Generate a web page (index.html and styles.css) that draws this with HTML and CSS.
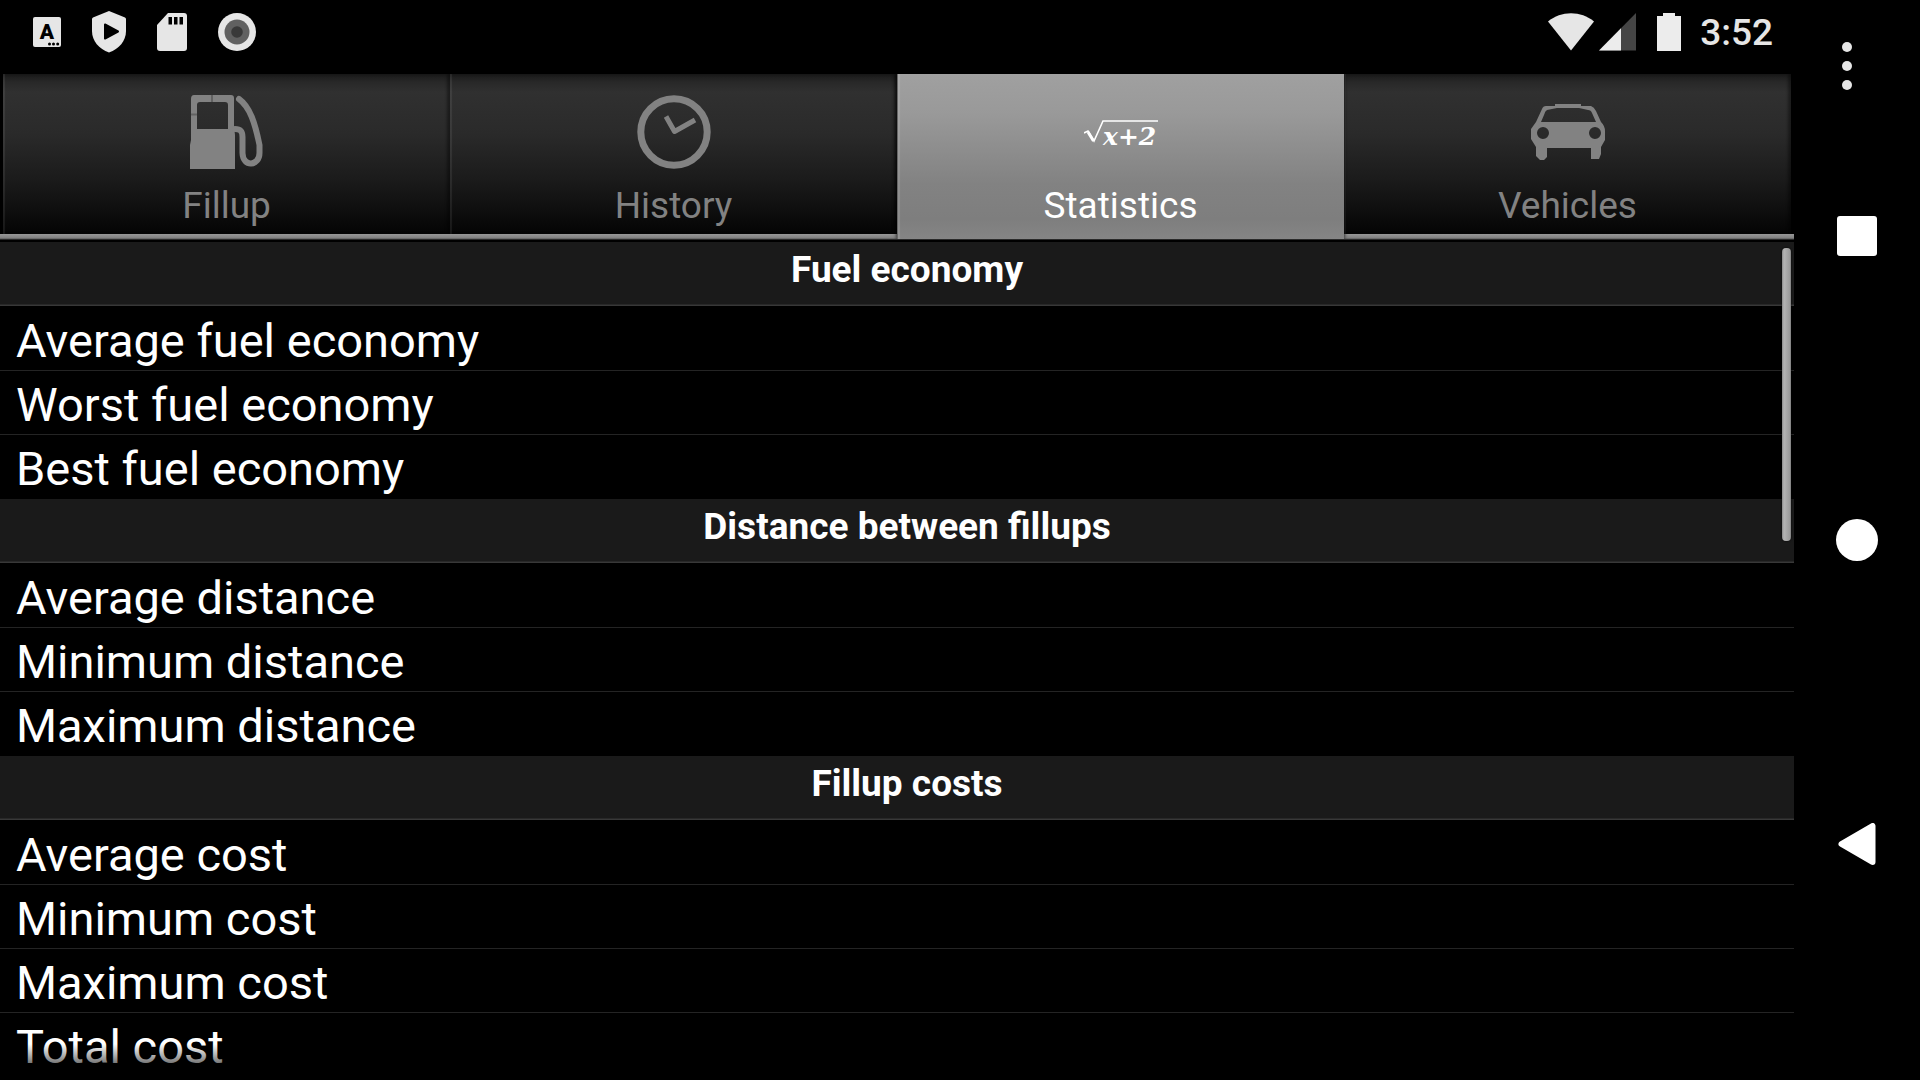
FILE: index.html
```html
<!DOCTYPE html>
<html lang="en">
<head>
<meta charset="utf-8">
<title>Statistics</title>
<meta name="viewport" content="width=device-width, initial-scale=1">
<link rel="stylesheet" href="styles.css">
</head>
<body>
<div class="screen">
  <div class="app">
    <header class="status">
      <div class="status-left">
        <svg class="icon" width="28" height="30" viewBox="0 0 28 30" aria-hidden="true">
          <rect width="28" height="30" rx="2" fill="#e6e6e6"/>
          <text class="keyboard-letter" x="14" y="22" text-anchor="middle">A</text>
          <circle cx="16.500" cy="27" r="1.500"/><circle cx="20.500" cy="27" r="1.500"/><circle cx="24.700" cy="27" r="1.500"/>
        </svg>
        <svg class="icon" width="34" height="42" viewBox="0 0 34 42" aria-hidden="true">
          <path fill="#e6e6e6" d="M17 0 33 6.500Q34 7 34 8V20C34 30 27 38 17 41.500C7 38 0 30 0 20V8Q0 7 1 6.500Z"/>
          <path d="M13 13.500 26 20.500 13 27.500Z" stroke="#000" stroke-width="2" stroke-linejoin="round"/>
        </svg>
        <svg class="icon" width="30" height="38" viewBox="0 0 30 38" aria-hidden="true">
          <path fill="#e6e6e6" d="M11 0H27Q30 0 30 3V35Q30 38 27 38H3Q0 38 0 35V12Z"/>
          <path d="M11.500 4h3.500v7.500h-3.500zM17 4h3.500v7.500h-3.500zM22.500 4h3.500v7.500h-3.500z"/>
        </svg>
        <svg class="icon" width="38" height="38" viewBox="0 0 38 38" aria-hidden="true">
          <circle cx="19" cy="19" r="19" fill="#e6e6e6"/><circle cx="19" cy="19" r="12.500" fill="#616161"/><circle cx="19" cy="19" r="5.800" fill="#393939"/>
        </svg>
      </div>
      <div class="status-right">
        <svg class="icon" width="88" height="38" viewBox="0 0 88 38" aria-hidden="true">
          <path fill="#e6e6e6" d="M0 8.500C13-2.500 33-2.500 46 8.500L23 37.500Z"/>
          <path fill="#454545" d="M88 0V37.500H51Z"/><path fill="#ececec" d="M73 15.200V37.500H51Z"/>
        </svg>
        <svg class="icon" width="26" height="38" viewBox="-2 0 26 38" aria-hidden="true">
          <path fill="#ececec" d="M6 0H18V3H24V38H0V3H6Z"/>
        </svg>
        <time class="clock">3:52</time>
      </div>
    </header>

    <nav class="tabs" role="tablist">
      <button class="tab" role="tab" aria-selected="false">
        <svg class="tab-icon" width="74" height="74" viewBox="0 0 74 74" aria-hidden="true">
          <path fill="#828282" fill-rule="evenodd" d="M4 0H41Q44 0 44 3V31L45 40V74H0V50L1 45V4Q1 0 4 0ZM10 7Q7 7 7 10V34H38V10Q38 7 35 7Z"/>
          <path stroke="#626262" stroke-width="2" d="M22 0V7M1 19.500H7"/>
          <path fill="none" stroke="#828282" stroke-width="6" stroke-linecap="round" d="M49 4C60 12 65 28 69.500 50V58C69.500 71 53 73 52.500 58V42C52.500 36 50 34 45 34"/>
        </svg>
        <span>Fillup</span>
      </button>
      <button class="tab" role="tab" aria-selected="false">
        <svg class="tab-icon" width="74" height="74" viewBox="0 0 74 74" fill="none" stroke="#828282" aria-hidden="true">
          <circle cx="37" cy="37" r="33.200" stroke-width="7"/>
          <path stroke-width="5" stroke-linejoin="round" d="M29 21.500 37.500 36.500 58 25"/>
        </svg>
        <span>History</span>
      </button>
      <button class="tab tab-selected" role="tab" aria-selected="true">
        <svg class="tab-icon" width="74" height="74" viewBox="0 0 74 74" aria-hidden="true">
          <path fill="none" stroke="#fff" stroke-width="1.600" d="M0 38 4 36 10 46 19 26H74"/>
          <path stroke="#fff" stroke-width="3" d="M4 37 9.500 46"/>
          <text class="formula" x="19" y="50">x+2</text>
        </svg>
        <span>Statistics</span>
      </button>
      <button class="tab" role="tab" aria-selected="false">
        <svg class="tab-icon" width="74" height="74" viewBox="0 0 74 74" aria-hidden="true">
          <path fill="#828282" fill-rule="evenodd" d="M24 9H50V11H60Q63 12 65 16L70 27Q74 31 74 36V45L70 52V59L68 64H60V53H16V62L13 65H9L5 61V52L0 44V34L5 27 11 14Q12 11 15 11H24ZM16 15Q14 16 13 20L10 27H65L61 18Q60 15 57 15L48 13H26ZM6 38A6 6 0 1 0 18 38 6 6 0 1 0 6 38ZM58 38A6 6 0 1 0 70 38 6 6 0 1 0 58 38Z"/>
        </svg>
        <span>Vehicles</span>
      </button>
    </nav>

    <main class="list">
      <section>
        <h2 class="group">Fuel economy</h2>
        <ul class="rows"><li>Average fuel economy</li><li>Worst fuel economy</li><li>Best fuel economy</li></ul>
      </section>
      <section>
        <h2 class="group">Distance between fillups</h2>
        <ul class="rows"><li>Average distance</li><li>Minimum distance</li><li>Maximum distance</li></ul>
      </section>
      <section>
        <h2 class="group">Fillup costs</h2>
        <ul class="rows"><li>Average cost</li><li>Minimum cost</li><li>Maximum cost</li><li>Total cost</li></ul>
      </section>
      <div class="thumb"></div>
    </main>
  </div>

  <nav class="keys" aria-label="System">
    <button class="key key-menu" aria-label="More options">
      <svg width="10" height="48" viewBox="0 0 10 48" fill="#e6e6e6"><circle cx="5" cy="5" r="5"/><circle cx="5" cy="24" r="5"/><circle cx="5" cy="43" r="5"/></svg>
    </button>
    <button class="key" aria-label="Recent apps">
      <svg width="40" height="40" viewBox="0 0 40 40"><rect width="40" height="40" rx="3" fill="#fff"/></svg>
    </button>
    <button class="key" aria-label="Home">
      <svg width="42" height="42" viewBox="0 0 42 42"><circle cx="21" cy="21" r="21" fill="#fff"/></svg>
    </button>
    <button class="key" aria-label="Back">
      <svg width="38" height="42" viewBox="0 0 38 42"><path fill="#fff" stroke="#fff" stroke-width="6" stroke-linejoin="round" d="M3.500 21 34.500 3V39Z"/></svg>
    </button>
  </nav>
</div>
</body>
</html>
```
FILE: styles.css
```css
* {
  box-sizing: border-box;
}

body {
  margin: 0;
  background: #000;
  color: #fff;
  font-family: Roboto, "Noto Sans", sans-serif;
}

button {
  margin: 0;
  padding: 0;
  border: 0;
  background: none;
  color: inherit;
  font: inherit;
}

svg {
  display: block;
}

.screen {
  display: grid;
  grid-template-columns: minmax(0, 1fr) 126px;
  height: 100vh;
  overflow: hidden;
}

.app {
  display: flex;
  flex-direction: column;
  min-height: 0;
}

/* Status bar */
.status {
  display: flex;
  justify-content: space-between;
  flex: none;
  height: 74px;
  padding: 0 21px 10px 33px;
}

.status-left,
.status-right {
  display: flex;
  align-items: center;
}

.status-left {
  gap: 31px;
}

.status-right {
  gap: 19px;
}

.keyboard-letter {
  font-weight: 900;
  font-size: 21px;
}

.clock {
  padding-top: 2px;
  color: #e6e6e6;
  font-weight: 500;
  font-size: 37px;
  line-height: 44px;
}

/* Tabs */
.tabs {
  display: grid;
  grid-template-columns: repeat(4, 1fr);
  flex: none;
  height: 168px;
  padding: 0 3px 8px;
  background:
    linear-gradient(#979797, #808080 4px, #555 5px, #000 6px) 0 160px / 100% 8px no-repeat;
}

.tab {
  display: flex;
  flex-direction: column;
  align-items: center;
  gap: 16px;
  height: 160px;
  padding-top: 21px;
  background: linear-gradient(#191919, #282828 8px, #303030 18px, #2a2a2a 60px, #1b1b1b 105px, #111 130px, #040404);
  box-shadow: inset 2px 0 1px rgba(255, 255, 255, .08), inset -3px 0 3px rgba(0, 0, 0, .4);
  color: #828282;
  font-size: 37px;
  line-height: 42px;
}

.tab-selected {
  height: 165px;
  background: linear-gradient(#a0a0a0, #999 40px, #828282 110px, #7e7e7e 145px, #858585);
  box-shadow: inset 1px 0 #666, inset 3px 0 1px rgba(255, 255, 255, .12), 0 0 4px #000;
  clip-path: inset(0 -6px 0 -6px);
  color: #fff;
}

.formula {
  fill: #fff;
  font-family: "DejaVu Serif", serif;
  font-style: italic;
  font-weight: bold;
  font-size: 25px;
}

/* Statistics list */
.list {
  position: relative;
  flex: 1;
  min-height: 0;
  overflow: hidden;
}

.list::after {
  content: "";
  position: absolute;
  inset: auto 0 0;
  height: 36px;
  background: linear-gradient(rgba(0, 0, 0, 0), #000);
}

.group {
  height: 64px;
  margin: 0 0 1px;
  padding: 7px 0 0 20px;
  border-bottom: 1px solid #383838;
  background: #1a1a1a;
  box-shadow: inset 0 -1px #282828;
  font-weight: 700;
  font-size: 37px;
  line-height: 42px;
  text-align: center;
}

.rows {
  margin: 0;
  padding: 0;
  list-style: none;
}

.rows li {
  height: 64px;
  padding: 6px 16px 0;
  border-bottom: 1px solid #242424;
  font-size: 47px;
  line-height: 56px;
}

.rows li:last-child {
  border-bottom-color: transparent;
}

.thumb {
  position: absolute;
  top: 6px;
  right: 3px;
  width: 9px;
  height: 293px;
  border-radius: 4px;
  background: linear-gradient(90deg, #888, #b4b4b4 2px, #999 8px, #777);
  box-shadow: 0 0 2px #000;
}

/* System keys */
.keys {
  display: grid;
  grid-template-rows: 132px 208fr 400fr 208fr 132fr;
}

.key {
  display: flex;
  align-items: center;
  justify-content: center;
}

.key-menu {
  width: 106px;
}
```
